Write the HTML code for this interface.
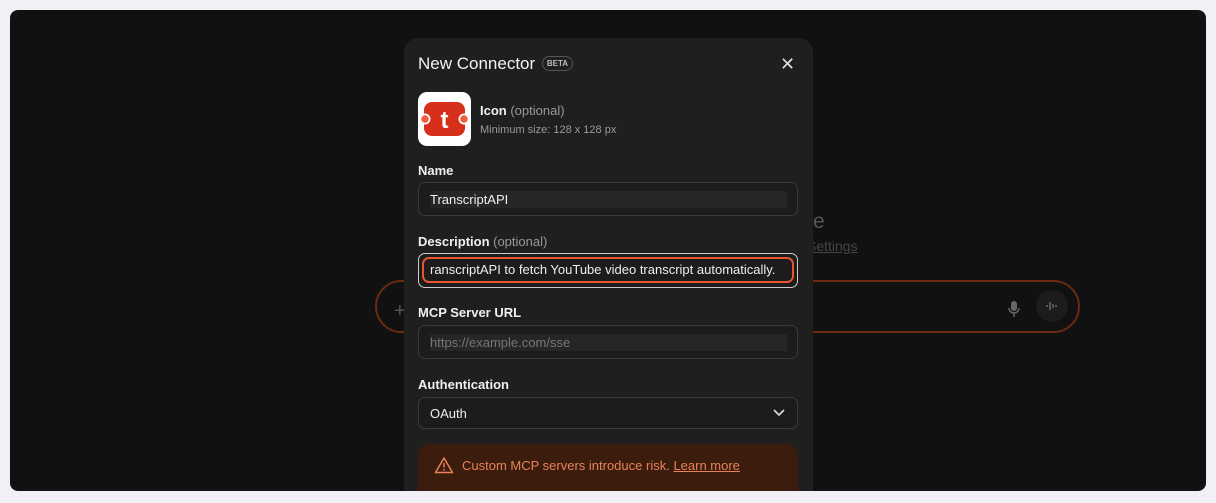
<!DOCTYPE html>
<html><head><style>
*{box-sizing:border-box;margin:0;padding:0}
html,body{width:1216px;height:503px;overflow:hidden}
body{background:#f1f0f4;font-family:"Liberation Sans",sans-serif;position:relative}
.panel{position:absolute;left:10px;top:10px;width:1196px;height:481px;background:#111;border-radius:8px;overflow:hidden}
.bar{position:absolute;left:365px;top:270px;width:705px;height:53px;border:2px solid #6a2a12;border-radius:27px}
.bg1{position:absolute;left:803px;top:200px;color:#555;font-size:21px}
.bg2{position:absolute;left:797px;top:228px;color:#444;font-size:14px;text-decoration:underline}
.modal{position:absolute;left:404px;top:38px;width:409px;height:465px;background:#1f1f1f;border-radius:14px 14px 0 0;color:#eee}
.t{position:absolute;left:14px;top:16px;font-size:17px;color:#f2f2f2}
.beta{display:inline-block;font-size:8px;font-weight:bold;border:1px solid #555;border-radius:8px;padding:2px 4px;color:#bbb;vertical-align:3px;margin-left:2px}
.x{position:absolute;left:376px;top:16px;font-size:18px;color:#ddd}
.icon{position:absolute;left:14px;top:54px;width:53px;height:54px;background:#fff;border-radius:9px}
.lab{position:absolute;left:14px;font-size:13px;font-weight:bold;color:#f0f0f0}
.lab span{font-weight:normal;color:#999}
.inp{position:absolute;left:14px;width:380px;height:34px;border:1px solid #3a3a3a;border-radius:7px;background:#1c1c1c;font-size:13px;padding:9px 11px}
.fill{position:absolute;left:11px;top:8px;width:357px;height:17px;background:#262626}
.warn{position:absolute;left:14px;top:406px;width:380px;height:70px;background:#3b1c0d;border-radius:12px;color:#e8825a;font-size:13px;padding:14px 0 0 44px}
</style></head><body>
<div class="panel">
 <div class="bar"></div>
 <div style="position:absolute;left:384px;top:290px;color:#555;font-size:20px">+</div>
 <div class="bg1">e</div><div class="bg2">Settings</div>
 <svg style="position:absolute;left:996px;top:290px" width="16" height="18"><rect x="5" y="1" width="6" height="10" rx="3" fill="#666"/><path d="M3 8a5 5 0 0 0 10 0M8 13v4" stroke="#666" stroke-width="1.5" fill="none"/></svg>
 <div style="position:absolute;left:1026px;top:280px;width:32px;height:32px;border-radius:16px;background:#1c1c1c"></div>
 <svg style="position:absolute;left:1034px;top:288px" width="16" height="16"><path d="M3 7v2M6 4v8M9 6v4M12 7v2" stroke="#666" stroke-width="1.5"/></svg>
</div>
<div class="modal">
 <div class="t">New Connector <span class="beta">BETA</span></div>
 <div class="x">✕</div>
 <div class="icon"><svg width="53" height="54"><rect x="6" y="10" width="41" height="34" rx="8" fill="#d7301a"/><circle cx="7" cy="27" r="5.5" fill="#fff"/><circle cx="46" cy="27" r="5.5" fill="#fff"/><circle cx="7" cy="27" r="3.8" fill="#f06040"/><circle cx="46" cy="27" r="3.8" fill="#f06040"/><text x="26.5" y="36" text-anchor="middle" font-family="Liberation Sans" font-weight="bold" font-size="24" fill="#fff">t</text></svg></div>
 <div class="lab" style="left:76px;top:65px">Icon <span>(optional)</span></div>
 <div style="position:absolute;left:76px;top:86px;font-size:11px;color:#999">Minimum size: 128 x 128 px</div>
 <div class="lab" style="top:125px">Name</div>
 <div class="inp" style="top:144px"><div class="fill"></div><span style="position:relative;color:#eee">TranscriptAPI</span></div>
 <div class="lab" style="top:196px">Description <span>(optional)</span></div>
 <div class="inp" style="top:215px;height:35px;border:1.5px solid #ccc;padding:3px"><div style="border:2.5px solid #e8552e;border-radius:7px;height:26px;padding:3px 6px;white-space:nowrap;overflow:hidden;color:#eee;font-size:13px">ranscriptAPI to fetch YouTube video transcript automatically.</div></div>
 <div class="lab" style="top:267px">MCP Server URL</div>
 <div class="inp" style="top:287px"><div class="fill"></div><span style="position:relative;color:#777">https://example.com/sse</span></div>
 <div class="lab" style="top:339px">Authentication</div>
 <div class="inp" style="top:359px;height:32px;padding:8px 11px;color:#eee">OAuth<svg style="position:absolute;right:12px;top:11px" width="12" height="8"><path d="M1 1l5 5 5-5" stroke="#ddd" stroke-width="1.6" fill="none"/></svg></div>
 <div class="warn"><svg style="position:absolute;left:16px;top:12px" width="20" height="18"><path d="M10 2L18.5 16.5H1.5Z" stroke="#e8825a" stroke-width="1.5" fill="none" stroke-linejoin="round"/><path d="M10 7v4.5" stroke="#e8825a" stroke-width="1.5"/><circle cx="10" cy="13.8" r=".9" fill="#e8825a"/></svg>Custom MCP servers introduce risk. <u>Learn more</u></div>
</div>
<div style="position:absolute;left:0;top:491px;width:1216px;height:12px;background:#f1f0f4"></div>
</body></html>
